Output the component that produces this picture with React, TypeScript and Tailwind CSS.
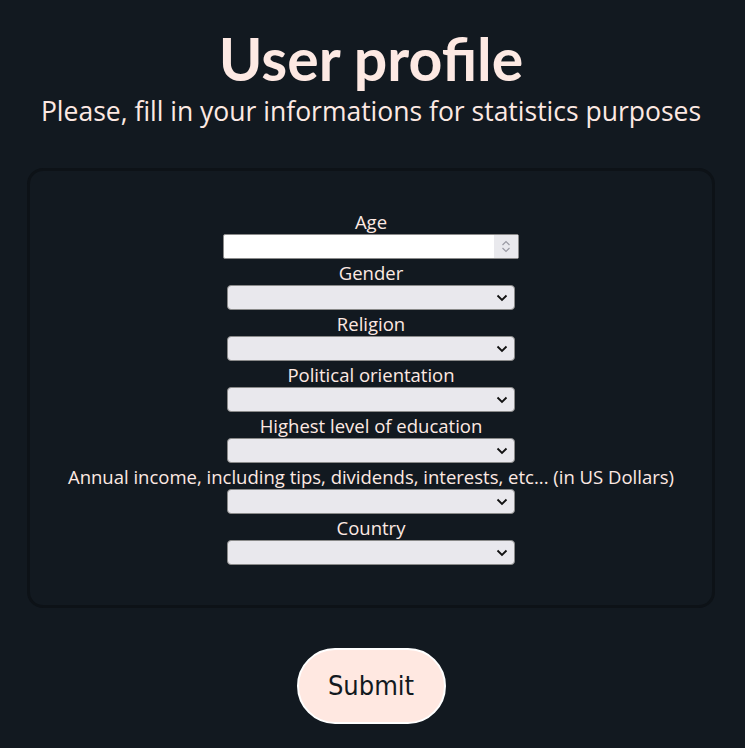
import { useState } from "react";

const fields = [
    "Gender",
    "Religion",
    "Political orientation",
    "Highest level of education",
    "Annual income, including tips, dividends, interests, etc... (in US Dollars)",
    "Country",
];

function Chevron() {
    return (
        <svg width="12" height="8" viewBox="0 0 12 8" className="pointer-events-none absolute right-[7px] top-[9px]">
            <path d="M1.5 1.5 L6 6 L10.5 1.5" fill="none" stroke="#111" strokeWidth="1.8" />
        </svg>
    );
}

export default function App() {
    const [age, setAge] = useState("");

    return (
        <div className="min-h-[748px] pr-[3px] bg-[#121920] text-[#fde9e3] font-['Open_Sans',sans-serif] flex flex-col items-center">
            <h1 className="mt-[24px] text-[59px] leading-[70px] font-bold font-['Lato',sans-serif]">User profile</h1>
            <p className="text-[26.5px] leading-[34px]">Please, fill in your informations for statistics purposes</p>

            <div className="mt-[40px] w-[688px] border-[3px] border-[#0d1217] rounded-2xl pt-[38px] pb-[40px] flex flex-col items-center">
                <label className="text-[18.5px] leading-[25px]">Age</label>
                <div className="relative">
                    <input
                        type="text"
                        value={age}
                        onChange={e => setAge(e.target.value)}
                        className="w-[296px] h-[25px] bg-white border border-[#8a8a8a] rounded-[2px] text-black outline-none px-1" />
                    <div className="absolute right-[1px] top-[1px] w-[24px] h-[23px] bg-[#e9e9ed] flex flex-col items-center justify-center gap-[1px]">
                        <svg width="10" height="6" viewBox="0 0 10 6"><path d="M1.5 5 L5 1.5 L8.5 5" fill="none" stroke="#9a9aa3" strokeWidth="1.2" /></svg>
                        <svg width="10" height="6" viewBox="0 0 10 6"><path d="M1.5 1 L5 4.5 L8.5 1" fill="none" stroke="#9a9aa3" strokeWidth="1.2" /></svg>
                    </div>
                </div>
                {fields.map((f, i) =>
                    <div key={i} className="flex flex-col items-center">
                        <label className="text-[18.5px] leading-[25px] mt-[1px] whitespace-nowrap">{f}</label>
                        <div className="relative">
                            <select className="appearance-none w-[288px] h-[25px] bg-[#e9e8ed] border border-[#8a8a8a] rounded-[4px] text-black outline-none">
                                <option></option>
                            </select>
                            <Chevron />
                        </div>
                    </div>
                )}
            </div>

            <button className="mt-[40px] w-[149px] h-[76px] rounded-full bg-[#ffe8e1] border-2 border-white text-[#121920] text-[27px] font-['DejaVu_Sans_Condensed','DejaVu_Sans',sans-serif]">
                Submit
            </button>
        </div>
    )
}
